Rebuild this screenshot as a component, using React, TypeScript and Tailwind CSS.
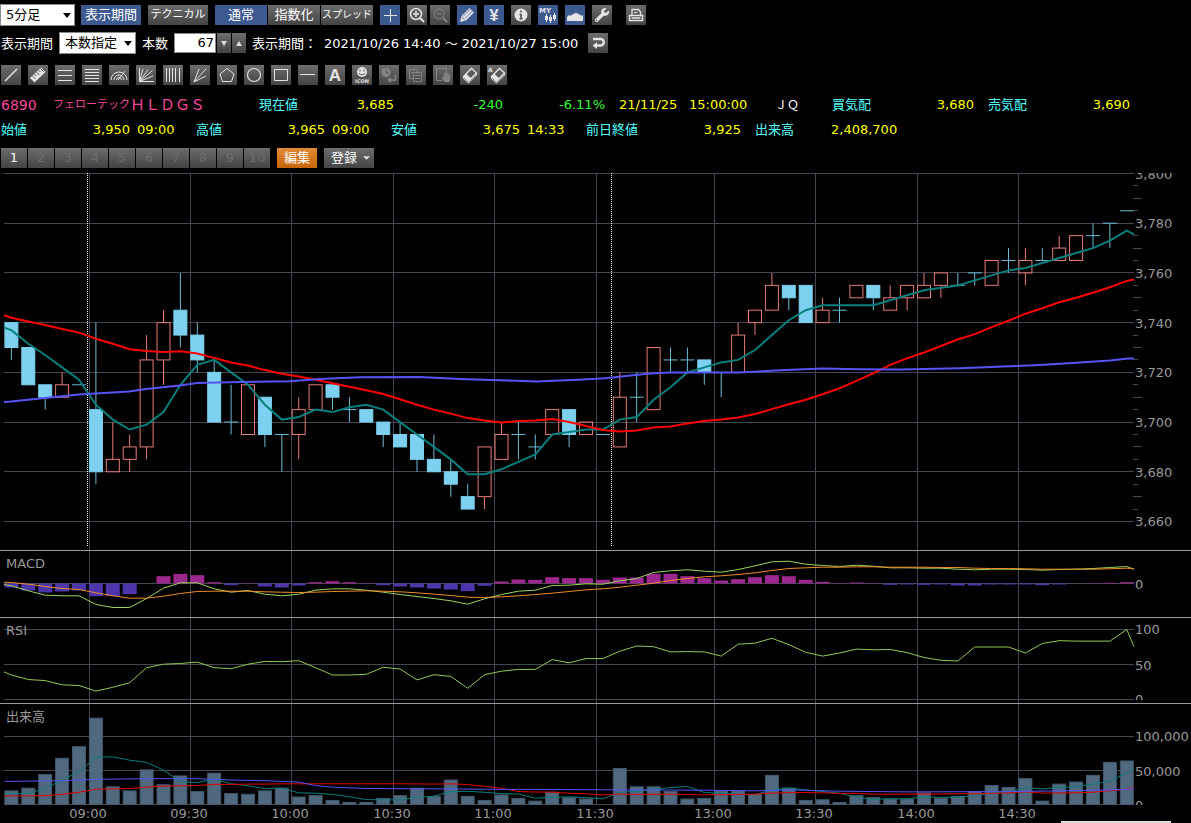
import type { ReactNode } from "react";
import clsx from "clsx";
import { FaHandPaper, FaWrench } from "react-icons/fa";

const STEP = 16.9;
const FIRST_X = 11.4;
const PLOT_LEFT = 4;
const PLOT_RIGHT = 1134;

type Point = [number, number];
// open, high, low, close
type Candle = [number, number, number, number];

const xAt = (i: number) => FIRST_X + i * STEP;

const candles: Candle[] = [
  [3740, 3740, 3725, 3730], [3730, 3730, 3715, 3715], [3715, 3715, 3705, 3710], [3710, 3720, 3710, 3715],
  [3715, 3715, 3715, 3715], [3705, 3740, 3675, 3680], [3680, 3700, 3680, 3685], [3685, 3695, 3680, 3690],
  [3690, 3735, 3685, 3725], [3725, 3745, 3715, 3740], [3745, 3760, 3730, 3735], [3735, 3740, 3720, 3725],
  [3720, 3725, 3700, 3700], [3700, 3715, 3695, 3700], [3695, 3715, 3695, 3715], [3710, 3710, 3690, 3695],
  [3695, 3695, 3680, 3695], [3695, 3710, 3685, 3705], [3705, 3715, 3705, 3715], [3715, 3715, 3705, 3710],
  [3705, 3710, 3700, 3705], [3705, 3705, 3700, 3700], [3700, 3700, 3690, 3695], [3695, 3700, 3690, 3690],
  [3695, 3695, 3680, 3685], [3685, 3695, 3680, 3680], [3680, 3685, 3670, 3675], [3670, 3675, 3665, 3665],
  [3670, 3690, 3665, 3690], [3685, 3700, 3685, 3695], [3695, 3700, 3685, 3695], [3690, 3695, 3685, 3690],
  [3695, 3705, 3695, 3705], [3705, 3705, 3690, 3695], [3695, 3700, 3695, 3700], [3695, 3695, 3695, 3695],
  [3690, 3720, 3690, 3710], [3710, 3720, 3700, 3710], [3705, 3730, 3705, 3730], [3725, 3730, 3720, 3725],
  [3725, 3730, 3720, 3725], [3725, 3725, 3715, 3720], [3720, 3720, 3710, 3720], [3720, 3740, 3720, 3735],
  [3740, 3745, 3735, 3745], [3745, 3760, 3745, 3755], [3755, 3755, 3745, 3750], [3755, 3755, 3740, 3740],
  [3740, 3750, 3740, 3745], [3745, 3750, 3740, 3745], [3750, 3755, 3750, 3755], [3755, 3755, 3745, 3750],
  [3745, 3755, 3745, 3750], [3750, 3755, 3745, 3755], [3750, 3760, 3750, 3755], [3755, 3760, 3750, 3760],
  [3755, 3760, 3755, 3755], [3760, 3760, 3755, 3760], [3755, 3765, 3755, 3765], [3765, 3770, 3760, 3765],
  [3760, 3770, 3755, 3765], [3765, 3770, 3765, 3765], [3765, 3775, 3765, 3770], [3765, 3775, 3765, 3775],
  [3775, 3780, 3770, 3775], [3780, 3780, 3770, 3780], [3785, 3785, 3785, 3785],
];

// in thousands of shares
const volumes = [
  20, 24, 44, 68, 85, 127, 26, 20, 51, 29, 42, 19, 46, 16, 15, 20, 24, 11, 13, 6, 3, 3, 9, 13, 24, 12, 36, 12, 6, 14,
  9, 5, 18, 10, 8, 0, 53, 26, 26, 19, 8, 9, 20, 20, 15, 43, 24, 6, 7, 3, 13, 10, 8, 8, 17, 9, 12, 19, 28, 25, 38, 5,
  30, 33, 43, 62, 64,
];

const rsi = [
  35, 28.5, 27, 21, 20, 12, 17.5, 24, 45.5, 50.5, 51.5, 53.5, 45.5, 44, 50.5, 54.5, 54, 55.5, 45.5, 35, 35, 36, 46,
  43.5, 28, 35.5, 33, 16, 35.5, 40.5, 43, 43, 57, 52.5, 58.5, 58.5, 69, 76.5, 75.5, 68, 68.5, 68, 62, 79, 80.5, 87.5,
  78.5, 67.5, 62, 66.5, 72, 71, 71.5, 67, 60, 56, 55, 75, 75, 75, 66.5, 80, 84, 83.5, 83.5, 83.5, 100,
];

const macd = [
  -7, -22, -35, -37, -37, -63, -72, -72, -45, -14, 2, 2, -16, -26, -21, -32, -37, -32, -20, -16, -16, -20, -26, -33,
  -39, -45, -52, -62, -46, -33, -23, -20, -6, -5, -1, -2, 8, 15, 33, 38, 41, 37, 34, 42, 53, 65, 67, 58, 54, 51, 55,
  52, 47, 47, 46, 46, 43, 41, 43, 43, 42, 40, 42, 43, 45, 48, 51,
];

const macdSignal = [
  3, -2, -9, -15, -18, -28, -37, -44, -44, -38, -30, -24, -23, -23, -23, -25, -26, -27, -26, -24, -23, -22, -23, -25,
  -28, -32, -36, -41, -42, -40, -37, -33, -29, -24, -19, -16, -11, -5, 1, 9, 15, 20, 23, 27, 32, 39, 45, 47, 49, 49,
  50, 50, 49, 49, 49, 48, 48, 46, 45, 45, 44, 43, 43, 43, 43, 44, 46,
];

const macdHistogram = [
  -12, -21, -27, -24, -21, -38, -38, -32, 0, 22, 29, 25, 4, -5, 1, -9, -12, -6, 4, 7, 4, 1, -5, -9, -12, -15, -18,
  -23, -7, 6, 12, 11, 19, 16, 16, 11, 18, 18, 29, 29, 22, 16, 9, 13, 19, 25, 22, 11, 5, 1, 3, 1, -4, -3, -4, -3, -6,
  -6, -3, -3, -3, -5, -3, 0, 1, 2, 4,
];

const priceMa75: Point[] = [
  [4, 229], [11, 228.5], [45, 225], [79, 221.5], [129, 218.5], [146, 216], [180, 212.5], [197, 210], [240, 209],
  [290, 208.3], [320, 206], [360, 204.2], [420, 204], [460, 206], [500, 207.3], [537, 208.5], [583, 206.5],
  [605, 205.3], [633, 202.3], [650, 200.6], [670, 199.6], [740, 199.5], [780, 197.3], [822, 195.5], [860, 196.3],
  [900, 196.5], [960, 195.3], [1010, 193.3], [1040, 192], [1080, 189.6], [1110, 187.5], [1128, 185.6], [1134, 185.5],
];

const volumeMa75: Point[] = [
  [-0.4, 34], [3, 35], [5, 37], [8, 38], [11, 38], [13, 36], [15, 35], [17, 33], [18, 28], [19, 25.5], [21, 23.5],
  [28, 22.5], [36, 21.5], [41, 21], [44, 20], [46, 21.5], [49, 19.5], [53, 18.5], [59, 19], [62, 20], [64, 21],
  [66, 22], [66.4, 23.5],
];

const gridTimes = [
  { x: 89, time: "09:00" },
  { x: 190, time: "09:30" },
  { x: 291, time: "10:00" },
  { x: 393, time: "10:30" },
  { x: 494, time: "11:00" },
  { x: 596, time: "11:30" },
  { x: 714, time: "13:00" },
  { x: 815, time: "13:30" },
  { x: 917, time: "14:00" },
  { x: 1018, time: "14:30" },
];

// Averages before a full window exists come from the previous session.
const movingAverage = (values: number[], size: number, previous: number[]) =>
  values.map((_, i) =>
    i < size - 1 ? previous[i] : values.slice(i - size + 1, i + 1).reduce((a, b) => a + b, 0) / size,
  );

const toPoints = (points: Point[]) => points.map(([x, y]) => `${x.toFixed(1)},${y.toFixed(1)}`).join(" ");

const series = (values: number[], scale: (v: number) => number, first: number, last: number) =>
  toPoints([
    [PLOT_LEFT, scale(first)],
    ...values.map((v, i): Point => [xAt(i), scale(v)]),
    [PLOT_RIGHT, scale(last)],
  ]);

const priceY = (p: number) => 0.5 + (3800 - p) * 2.4857;
const macdY = (v: number) => 33.5 - v / 3;
const rsiY = (v: number) => 82.5 - v * 0.7;
const volumeY = (v: number) => 101.5 - v * 0.68;

const closes = candles.map((c) => c[3]);
const priceMa5 = movingAverage(closes, 5, [3737, 3731.5, 3727, 3722]);
const priceMa25 = movingAverage(closes, 25, [
  3742, 3740.5, 3739, 3737.5, 3736, 3733.5, 3731.5, 3729.3, 3728.6, 3728.2, 3728.5, 3727.6, 3725.8, 3724, 3722.7,
  3720.9, 3719.4, 3718.3, 3717, 3715.6, 3714.2, 3712.8, 3711.3, 3709.2,
]);
const volumeMa5 = movingAverage(volumes, 5, [15.7, 16.2, 23.5, 36]);
const volumeMa25 = movingAverage(volumes, 25, [
  12.7, 12.7, 13, 15, 18, 22.5, 23, 23.5, 25.5, 27, 27.5, 28, 29.5, 29.5, 30, 30, 30.5, 30.5, 30.5, 30.5, 30.5, 30.5,
  30.5, 30.5,
]);

const Grid = ({ height, levels }: { height: number; levels: number[] }) => (
  <g stroke="#444654" shapeRendering="crispEdges">
    {levels.map((y) => (
      <line key={y} x1={PLOT_LEFT} x2={PLOT_RIGHT} y1={Math.floor(y) + 0.5} y2={Math.floor(y) + 0.5} />
    ))}
    {gridTimes.map(({ x }) => (
      <line key={x} x1={x + 0.5} x2={x + 0.5} y1={0} y2={height} />
    ))}
  </g>
);

const AxisLabel = ({ y, children }: { y: number; children: ReactNode }) => (
  <text x={1135} y={Math.floor(y) + 5} fill="#999">
    {children}
  </text>
);

interface PanelProps {
  label: string;
  height: number;
  children: ReactNode;
}

const Panel = ({ label, height, children }: PanelProps) => (
  <svg viewBox={`0 0 1191 ${height}`} role="img" aria-label={label} className="block w-full text-[13px]">
    {children}
  </svg>
);

const PanelTop = ({ label }: { label: string }) => (
  <>
    <line x1={0} x2={1191} y1={0.5} y2={0.5} stroke="#999" shapeRendering="crispEdges" />
    <text x={6} y={18} fill="#999">
      {label}
    </text>
  </>
);

const CandleShape = ({ candle, x }: { candle: Candle; x: number }) => {
  const [open, high, low, close] = candle;
  const top = priceY(Math.max(open, close));
  const bottom = priceY(Math.min(open, close));
  const rising = close > open;
  return (
    <g stroke={rising ? "#e57b75" : "#6dbbd6"}>
      <line x1={x} x2={x} y1={priceY(high)} y2={top} />
      <line x1={x} x2={x} y1={bottom} y2={priceY(low)} />
      {open === close ? (
        <line x1={x - 7} x2={x + 7} y1={top} y2={top} />
      ) : (
        <rect
          x={x - 6.5}
          y={top}
          width={13}
          height={bottom - top}
          fill={rising ? "none" : "#7dd0f0"}
          stroke={rising ? "#e57b75" : "#7dd0f0"}
        />
      )}
    </g>
  );
};

const PriceChart = () => (
  <Panel label="価格" height={377}>
    <Grid height={377} levels={[0, 20, 40, 60, 80, 100, 120, 140].map((d) => priceY(3800 - d))} />
    <g stroke="#444654" shapeRendering="crispEdges">
      {Array.from({ length: 28 }, (_, i) => 3795 - i * 5)
        .filter((p) => p % 20 !== 0)
        .map((p) => (
          <line
            key={p}
            x1={1133}
            x2={p % 10 === 0 ? 1142 : 1138}
            y1={Math.floor(priceY(p)) + 0.5}
            y2={Math.floor(priceY(p)) + 0.5}
          />
        ))}
    </g>
    {candles.map((candle, i) => (
      <CandleShape key={i} candle={candle} x={xAt(i)} />
    ))}
    <g stroke="#fff" strokeDasharray="1 1" shapeRendering="crispEdges">
      <line x1={87.5} x2={87.5} y1={0} y2={373} />
      <line x1={611.5} x2={611.5} y1={0} y2={373} />
    </g>
    <g fill="none" strokeWidth={2}>
      <polyline points={series(priceMa5, priceY, 3738, 3775.5)} stroke="#087f7c" />
      <polyline points={series(priceMa25, priceY, 3743, 3757.3)} stroke="#f00" />
      <polyline points={toPoints(priceMa75)} stroke="#5754f5" />
    </g>
    {[3800, 3780, 3760, 3740, 3720, 3700, 3680, 3660].map((p) => (
      <AxisLabel key={p} y={priceY(p) + 0.5}>
        {p.toLocaleString("en-US")}
      </AxisLabel>
    ))}
  </Panel>
);

const MacdChart = () => (
  <Panel label="MACD" height={67}>
    <Grid height={67} levels={[33]} />
    <PanelTop label="MACD" />
    {macdHistogram.map((v, i) => (
      <rect
        key={i}
        x={xAt(i) - 7}
        y={Math.min(macdY(v), macdY(0))}
        width={14}
        height={Math.abs(v) / 3}
        fill={v > 0 ? "#9c278e" : "#4d35ab"}
      />
    ))}
    <g fill="none">
      <polyline points={series(macd, macdY, -3, 43)} stroke="#9bd45d" />
      <polyline points={series(macdSignal, macdY, 4, 44)} stroke="#f08a2b" />
    </g>
    <AxisLabel y={34}>0</AxisLabel>
  </Panel>
);

const RsiChart = () => (
  <Panel label="RSI" height={86}>
    <clipPath id="rsi-axis">
      <rect width={1191} height={83} />
    </clipPath>
    <Grid height={86} levels={[12, 47, 82]} />
    <PanelTop label="RSI" />
    <polyline points={series(rsi, rsiY, 39.5, 75.5)} fill="none" stroke="#8fc957" />
    <g clipPath="url(#rsi-axis)">
      <AxisLabel y={12}>100</AxisLabel>
      <AxisLabel y={48}>50</AxisLabel>
      <AxisLabel y={82}>0</AxisLabel>
    </g>
  </Panel>
);

const VolumeChart = () => (
  <Panel label="出来高" height={118}>
    <clipPath id="volume-axis">
      <rect width={1191} height={102} />
    </clipPath>
    <Grid height={102} levels={[33, 67, 101]} />
    <PanelTop label="出来高" />
    {volumes.map((v, i) => (
      <rect
        key={i}
        x={xAt(i) - 6.5}
        y={volumeY(v)}
        width={13}
        height={v * 0.68}
        fill="#50697f"
        stroke="#41586d"
      />
    ))}
    <g fill="none">
      <polyline points={series(volumeMa5, volumeY, 15.2, 53)} stroke="#087f7c" />
      <polyline points={series(volumeMa25, volumeY, 12.7, 24.5)} stroke="#e40000" />
      <polyline points={toPoints(volumeMa75.map(([i, v]): Point => [xAt(i), volumeY(v)]))} stroke="#5754f5" />
    </g>
    <g clipPath="url(#volume-axis)">
      <AxisLabel y={33}>100,000</AxisLabel>
      <AxisLabel y={68}>50,000</AxisLabel>
      <AxisLabel y={102}>0</AxisLabel>
    </g>
    {gridTimes.map(({ x, time }) => (
      <text key={time} x={x - 1} y={115} fill="#999" textAnchor="middle">
        {time}
      </text>
    ))}
  </Panel>
);

const gray = "bg-linear-to-b from-[#6c6c6c] to-[#444]";
const blue = "bg-[#3c5990]";

interface ToolButtonProps {
  label: string;
  active?: boolean;
  disabled?: boolean;
  children: ReactNode;
}

const ToolButton = ({ label, active, disabled, children }: ToolButtonProps) => (
  <button
    type="button"
    aria-label={label}
    title={label}
    disabled={disabled}
    className={clsx("size-5 shrink-0", active ? blue : gray, disabled ? "text-[#858585]" : "text-[#e4e4e4]")}
  >
    <svg viewBox="0 0 20 20" className="size-5" fill="none" stroke="currentColor">
      {children}
    </svg>
  </button>
);

interface TextButtonProps {
  active?: boolean;
  className?: string;
  children: ReactNode;
}

const TextButton = ({ active, className, children }: TextButtonProps) => (
  <button
    type="button"
    className={clsx("h-5 shrink-0 whitespace-nowrap text-white leading-5", active ? blue : gray, className)}
  >
    {children}
  </button>
);

const Select = ({ label, value, className }: { label: string; value: string; className: string }) => (
  <span className={clsx("relative shrink-0", className)}>
    <select
      aria-label={label}
      defaultValue={value}
      className="block h-[22px] w-full appearance-none border border-[#8a8a8a] bg-white pl-[5px] leading-5 text-black"
    >
      <option>{value}</option>
    </select>
    <svg viewBox="0 0 8 5" className="pointer-events-none absolute top-[9px] right-1 h-[5px] w-2">
      <path d="M0 0h8L4 5z" fill="#000" />
    </svg>
  </span>
);

const Eraser = () => (
  <>
    <path d="M3.5 11.5L11.5 3.5l5 4.5-8 8z" strokeWidth={1.3} />
    <path d="M3.5 11.5L6 9l5 4.500-2.500 2.500z" fill="currentColor" />
    <path d="M3.5 11.5v2l5 4.500 8-8V8" />
  </>
);

const MainToolbar = () => (
  <div className="flex h-[22px] items-center">
    <Select label="足種" value="5分足" className="w-[75px]" />
    <TextButton active className="ml-1.5 w-[60px]">表示期間</TextButton>
    <TextButton className="ml-[7px] w-[60px] text-[11px]">テクニカル</TextButton>
    <div className="ml-[7px] flex gap-px">
      <TextButton active className="w-[52px]">通常</TextButton>
      <TextButton className="w-[52px]">指数化</TextButton>
      <TextButton className="w-[52px] text-[10px]">スプレッド</TextButton>
    </div>
    <div className="ml-[7px] flex gap-[7px]">
      <ToolButton label="クロスライン" active>
        <path d="M4 10.5h13M10.5 4v13" />
      </ToolButton>
      <div className="flex gap-[3px]">
        <ToolButton label="拡大">
          <circle cx="9" cy="9" r="5.5" strokeWidth={1.5} />
          <path d="M6 9h6M9 6v6" strokeWidth={1.5} />
          <path d="M13 13l4 4" strokeWidth={2} />
        </ToolButton>
        <ToolButton label="縮小" disabled>
          <circle cx="9" cy="9" r="5" />
          <path d="M6.5 9h5" />
          <path d="M13 13l4 4" strokeWidth={2} />
        </ToolButton>
      </div>
      <ToolButton label="描画" active>
        <path d="M3 17l1.5-6 8-8 4.5 4.5-8 8z" fill="currentColor" stroke="none" />
        <path d="M6 11.5L13.5 4M8 13.5L15.500 6M4.500 12l3.500 3.500" stroke="#3c5990" strokeWidth={0.8} />
      </ToolButton>
      <ToolButton label="円" active>
        <text
          x="10"
          y="16"
          textAnchor="middle"
          fill="currentColor"
          stroke="none"
          className="font-['Liberation_Sans',sans-serif] text-[17px] font-bold"
        >
          ¥
        </text>
      </ToolButton>
      <ToolButton label="情報">
        <circle cx="10" cy="10" r="6.5" fill="currentColor" stroke="none" />
        <path d="M10 5.5v2M10 9v5.5M8.5 9.5H10M8.5 13.8h3" stroke="#505050" strokeWidth={1.6} />
      </ToolButton>
      <ToolButton label="マイチャート" active>
        <text x="1" y="8" fill="currentColor" stroke="none" className="text-[7px] font-bold">
          MY
        </text>
        <path d="M8.5 9v8M12.5 10v8M16.5 8v8" />
        <path d="M8.5 11v4M12.5 12v4M16.5 10v4" strokeWidth={3} />
      </ToolButton>
      <ToolButton label="出来高表示" active>
        <path
          d="M2 16v-4l2-2 2 1 1-2 1 1 1-2 1 1 1-2 1 2 1-1 1 2 1-1 1 2 2-1v6z"
          fill="currentColor"
          stroke="none"
        />
      </ToolButton>
      <ToolButton label="設定">
        <FaWrench x={3} y={3} size={14} stroke="none" />
      </ToolButton>
    </div>
    <div className="ml-3.5 flex">
      <ToolButton label="印刷">
        <path d="M6 10V4.5h6.5L14.5 7v3" strokeWidth={1.3} />
        <path d="M8 7.5h3.5" />
        <path d="M3.5 10.5h13v5h-13z" strokeWidth={1.5} />
        <path d="M5.5 13h9" strokeWidth={1.5} />
      </ToolButton>
    </div>
  </div>
);

const PeriodToolbar = () => (
  <div className="mt-1.5 flex h-[22px] items-center whitespace-nowrap leading-6 text-white">
    <span className="ml-px w-[58px] pt-0.5">表示期間</span>
    <Select label="表示期間" value="本数指定" className="w-[77px]" />
    <label htmlFor="bar-count" className="ml-1.5 w-8 pt-0.5">本数</label>
    <input
      id="bar-count"
      defaultValue="67"
      className="h-5 w-[42px] border border-[#8a8a8a] bg-white pr-px text-right text-black"
    />
    <button type="button" aria-label="本数を減らす" className={clsx("ml-px flex h-5 w-3.5 items-center justify-center", gray)}>
      <svg viewBox="0 0 8 5" className="w-2"><path d="M1 0h6L4 5z" fill="#ddd" /></svg>
    </button>
    <button type="button" aria-label="本数を増やす" className={clsx("ml-px flex h-5 w-3.5 items-center justify-center", gray)}>
      <svg viewBox="0 0 8 5" className="w-2"><path d="M1 5h6L4 0z" fill="#ddd" /></svg>
    </button>
    <span className="ml-1.5 w-[72px] pt-0.5">表示期間：</span>
    <span className="w-[264px] pt-0.5">2021/10/26 14:40 ～ 2021/10/27 15:00</span>
    <ToolButton label="元に戻す">
      <path d="M5 6h7.5a3 3 0 0 1 0 6.5H8" strokeWidth={2.5} />
      <path d="M4.5 12.5L9 9v7z" fill="currentColor" stroke="none" />
    </ToolButton>
  </div>
);

const DrawingToolbar = () => (
  <div className="mt-[11px] ml-px flex gap-[7px]">
    <ToolButton label="トレンドライン">
      <path d="M4 16L16 4" strokeWidth={1.5} />
    </ToolButton>
    <ToolButton label="定規">
      <path d="M2 13L13 2.5l4.5 4.5L6.5 17.5z" fill="currentColor" stroke="none" />
      <path d="M4.5 11l3 3M6.5 9l2 2M8.5 7l3 3M10.5 5l2 2M12.5 3.5l3 3" stroke="#555" />
    </ToolButton>
    <ToolButton label="水平線3本">
      <path d="M3 5.5h14M3 10.5h14M3 15.5h14" />
    </ToolButton>
    <ToolButton label="水平線5本">
      <path d="M3 4.5h14M3 7.5h14M3 10.5h14M3 13.5h14M3 16.5h14" />
    </ToolButton>
    <ToolButton label="ファン">
      <path d="M2 15a8 8 0 0 1 16 0M5 15a5 5 0 0 1 10 0M7.5 15a2.5 2.5 0 0 1 5 0M9 15l7-9" />
    </ToolButton>
    <ToolButton label="ファンライン">
      <path d="M3.5 3v13.5H18M3.5 16.5L7 4M3.5 16.5L12 4.5M3.5 16.5l13-11M3.5 16.5L17 11" />
    </ToolButton>
    <ToolButton label="垂直線">
      <path d="M3.5 3v14M6.5 3v14M9.5 3v14M12.5 3v14M16.5 3v14" />
    </ToolButton>
    <ToolButton label="スピードライン">
      <path d="M4 17L9 4M4 17L16 4M4 17l12-6" />
    </ToolButton>
    <ToolButton label="多角形">
      <path d="M10 3.5l7 5.5-2.5 7.5h-9L3 9z" />
    </ToolButton>
    <ToolButton label="円形">
      <circle cx="10" cy="10" r="6.5" strokeWidth={1.2} />
    </ToolButton>
    <ToolButton label="四角形">
      <path d="M3.5 4.5h13v11h-13z" />
    </ToolButton>
    <ToolButton label="水平線">
      <path d="M2 9.5h15" />
    </ToolButton>
    <ToolButton label="文字">
      <text
        x="10"
        y="16"
        textAnchor="middle"
        fill="currentColor"
        stroke="none"
        className="font-['Liberation_Sans',sans-serif] text-[17px] font-bold"
      >
        A
      </text>
    </ToolButton>
    <ToolButton label="アイコン">
      <circle cx="10" cy="7" r="5" fill="currentColor" stroke="none" />
      <path d="M8 4.5v2M12 4.5v2M7 8.500q3 3 6 0" stroke="#555" />
      <text x="10" y="18" textAnchor="middle" fill="currentColor" stroke="none" className="text-[5px] font-bold">
        ICON
      </text>
    </ToolButton>
    <ToolButton label="時間を戻す" disabled>
      <circle cx="7" cy="7.5" r="4.5" fill="currentColor" stroke="none" />
      <path d="M7 5v3h2.5" stroke="#505050" />
      <path d="M16.5 10v5H10" strokeWidth={1.5} />
      <path d="M8 15l4-3v6z" fill="currentColor" stroke="none" />
    </ToolButton>
    <ToolButton label="コピー" disabled>
      <path d="M11.5 7V4.5h-8v9h4M5 7.5h4" />
      <path d="M7.5 7.5h8v9h-8zM9 10.5h5M9 13.5h5" />
    </ToolButton>
    <ToolButton label="移動" disabled>
      <path d="M9 15.5H3.5v-12h10V7" />
      <FaHandPaper x={8} y={7} size={10} stroke="none" />
    </ToolButton>
    <ToolButton label="消しゴム">
      <Eraser />
    </ToolButton>
    <ToolButton label="すべて消す">
      <text x="1" y="7" fill="currentColor" stroke="none" className="text-[6px] font-bold">
        A
      </text>
      <g transform="translate(1 0)">
        <Eraser />
      </g>
    </ToolButton>
  </div>
);

const Label = ({ className, children }: { className: string; children: ReactNode }) => (
  <span className={clsx("shrink-0 text-[#5ff]", className)}>{children}</span>
);

const Value = ({ className, children }: { className: string; children: ReactNode }) => (
  <span className={clsx("shrink-0 text-right", className)}>{children}</span>
);

const Quote = () => (
  <div className="mt-2 ml-px whitespace-nowrap leading-6 text-[#ff0]">
    <div className="flex h-6 items-center">
      <h1 className="flex w-[258px] shrink-0 items-center text-[15px] text-[#f5479a]">
        <span className="w-[52px] text-sm">6890</span>
        <span className="text-[11px]">フェローテック</span>
        <span>ＨＬＤＧＳ</span>
      </h1>
      <Label className="w-[60px]">現在値</Label>
      <Value className="w-[75px]">3,685</Value>
      <Value className="w-[109px] text-[#3f3]">-240</Value>
      <Value className="w-[102px] text-[#3f3]">-6.11%</Value>
      <span className="ml-3.5 w-[70px]">21/11/25</span>
      <span className="w-[86px]">15:00:00</span>
      <span className="w-[57px] text-xs text-white">ＪＱ</span>
      <Label className="w-[66px]">買気配</Label>
      <Value className="w-[76px]">3,680</Value>
      <Label className="ml-3.5 w-[66px]">売気配</Label>
      <Value className="w-[76px]">3,690</Value>
    </div>
    <div className="mt-px flex h-6 items-center">
      <Label className="w-[60px]">始値</Label>
      <Value className="w-[69px]">3,950</Value>
      <span className="ml-[7px] w-[59px]">09:00</span>
      <Label className="w-[60px]">高値</Label>
      <Value className="w-[69px]">3,965</Value>
      <span className="ml-[7px] w-[59px]">09:00</span>
      <Label className="w-[60px]">安値</Label>
      <Value className="w-[69px]">3,675</Value>
      <span className="ml-[7px] w-[59px]">14:33</span>
      <Label className="w-[79px]">前日終値</Label>
      <Value className="w-[76px]">3,925</Value>
      <Label className="ml-3.5 w-[76px]">出来高</Label>
      <span>2,408,700</span>
    </div>
  </div>
);

const ChartTabs = () => (
  <div className="mt-1.5 ml-px flex gap-[7px]">
    <div className="flex gap-px">
      {[1, 2, 3, 4, 5, 6, 7, 8, 9, 10].map((n) => (
        <button
          key={n}
          type="button"
          disabled={n > 1}
          className={clsx("h-5 w-[26px] leading-5", gray, n > 1 ? "text-[#6e6e6e]" : "text-white")}
        >
          {n}
        </button>
      ))}
    </div>
    <button type="button" className="h-5 w-10 bg-linear-to-b from-[#e08a35] to-[#c86400] leading-5 text-white">
      編集
    </button>
    <button type="button" className={clsx("flex h-5 w-[50px] items-center gap-1.5 pl-[7px] text-white", gray)}>
      登録
      <svg viewBox="0 0 8 4" className="h-1 w-[7px]"><path d="M0 0h8L4 4z" fill="#ddd" /></svg>
    </button>
  </div>
);

export default function App() {
  return (
    <main className="min-h-screen overflow-hidden bg-black pt-1 font-['DejaVu_Sans','Noto_Sans_CJK_JP',sans-serif] text-[13px]">
      <MainToolbar />
      <PeriodToolbar />
      <DrawingToolbar />
      <Quote />
      <ChartTabs />
      <div className="mt-[5px]">
        <PriceChart />
        <MacdChart />
        <RsiChart />
        <VolumeChart />
      </div>
      <div className="flex justify-end pr-5">
        <div className="h-0.5 w-[110px] bg-[#e0dcd8]" />
      </div>
    </main>
  );
}
